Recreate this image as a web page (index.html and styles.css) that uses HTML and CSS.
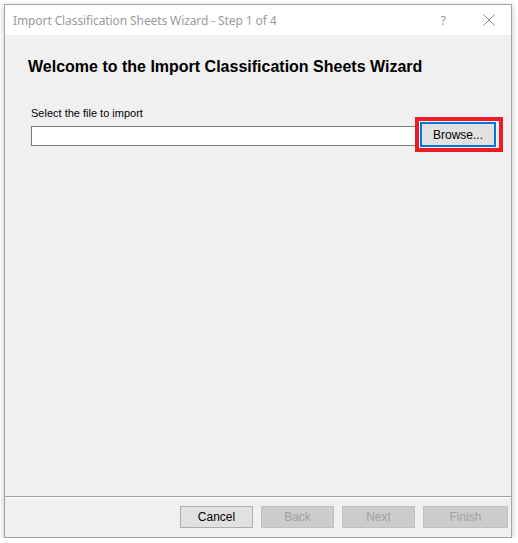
FILE: index.html
```html
<!DOCTYPE html>
<html>
<head>
<meta charset="utf-8">
<link rel="stylesheet" href="styles.css">
</head>
<body>
<div class="window">
  <div class="titlebar">
    <span class="title">Import Classification Sheets Wizard - Step 1 of 4</span>
    <span class="help">?</span>
    <svg class="close" width="12" height="12" viewBox="0 0 12 12"><path d="M0.5 0.5 L11.5 11.5 M11.5 0.5 L0.5 11.5" stroke="#8a8a8a" stroke-width="1" fill="none"/></svg>
  </div>
  <div class="content">
    <h1 class="heading">Welcome to the Import Classification Sheets Wizard</h1>
    <div class="label">Select the file to import</div>
    <div class="filerow">
      <div class="textbox"></div>
      <div class="highlight">
        <div class="btn browse">Browse...</div>
      </div>
    </div>
  </div>
  <div class="footer">
    <div class="btn cancel">Cancel</div>
    <div class="btn disabled">Back</div>
    <div class="btn disabled">Next</div>
    <div class="btn disabled finish">Finish</div>
  </div>
</div>
</body>
</html>
```
FILE: styles.css
```css
html, body {
  margin: 0;
  padding: 0;
  background: #ffffff;
}
body {
  padding: 4px 0 0 4px;
  font-family: "Liberation Sans", Arial, sans-serif;
}
.window {
  width: 506px;
  height: 532px;
  border: 1px solid #a3a3a3;
  background: #f0f0f0;
  box-shadow: 0 2px 6px rgba(0,0,0,0.25);
  display: flex;
  flex-direction: column;
}
.titlebar {
  height: 30px;
  background: #ffffff;
  display: flex;
  align-items: center;
  padding-left: 8px;
  flex-shrink: 0;
}
.title {
  font-family: "Noto Sans", "Open Sans", sans-serif;
  font-size: 12px;
  color: #9a9a9a;
  flex: 1;
  letter-spacing: -0.1px;
}
.help {
  font-family: "Noto Sans", sans-serif;
  font-size: 12px;
  color: #9a9a9a;
  margin-right: 37px;
}
.close {
  margin-right: 16px;
}
.content {
  flex: 1;
  padding: 0 0 0 26px;
  border-bottom: 1px solid #a0a0a0;
}
.heading {
  margin: 22px 0 0 -3px;
  font-size: 16px;
  font-weight: bold;
  color: #000;
  line-height: 20px;
}
.label {
  margin-top: 30px;
  font-size: 11px;
  color: #000;
  line-height: 13px;
}
.filerow {
  display: flex;
  align-items: flex-start;
  margin-top: -3px;
}
.textbox {
  box-sizing: border-box;
  width: 386px;
  height: 20px;
  margin-top: 9px;
  background: #fff;
  border: 1px solid #7a7a7a;
}
.highlight {
  margin-left: -2px;
  border: 4px solid #ed1c24;
  background: #f0f0f0;
  padding: 1px 3px 1px 1px;
  position: relative;
}
.btn {
  box-sizing: border-box;
  display: flex;
  align-items: center;
  justify-content: center;
  font-size: 11px;
  color: #000;
  background: #e1e1e1;
  border: 1px solid #adadad;
}
.browse {
  width: 76px;
  height: 25px;
  border: 2px solid #0078d7;
  font-size: 12px;
}
.footer {
  height: 40px;
  border-top: 1px solid #ffffff;
  display: flex;
  align-items: flex-start;
  justify-content: flex-end;
  padding: 8px 3px 0 0;
  box-sizing: border-box;
  gap: 8px;
  flex-shrink: 0;
}
.footer .btn {
  width: 73px;
  height: 22px;
  font-size: 12px;
}
.footer .disabled {
  background: #cccccc;
  border-color: #bfbfbf;
  color: #a0a0a0;
}
.footer .finish {
  width: 85px;
}
```
